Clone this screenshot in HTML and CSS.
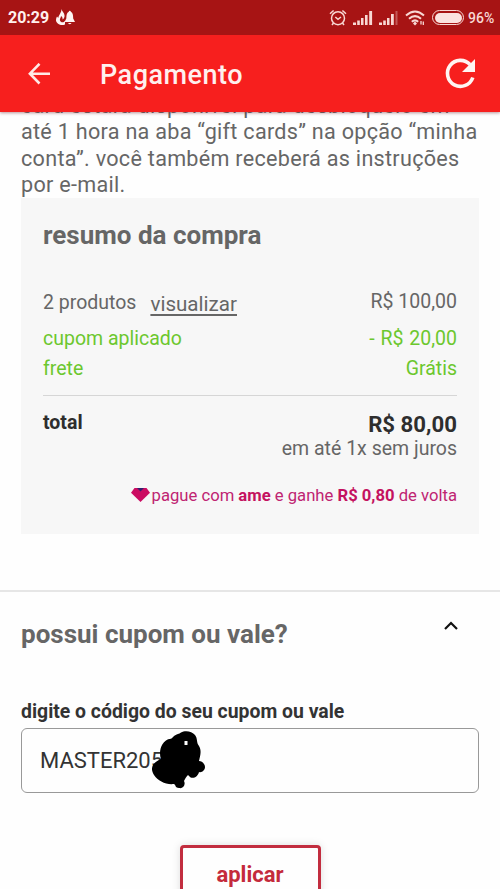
FILE: index.html
```html
<!DOCTYPE html>
<html lang="pt-BR">
<head>
<meta charset="utf-8">
<title>Pagamento</title>
<link rel="stylesheet" href="styles.css">
</head>
<body>
<header class="top">
  <div class="status">
    <span class="clock">20:29</span>
    <svg class="notif" width="20" height="18" viewBox="0 0 20 18"><path d="M5.500 0 C6 3 9 4 8.500 7.500 C8.300 9 7.400 10 6.500 10.500 C6.800 8.500 6 7.500 5 7 C4.800 9 3.500 10 4 11.500 C4.500 13.500 7.500 14 9 12 L9 15.500 C5 17 .5 15 0 11.500 C-.1 10 .4 8.500 1 7.500 L2.300 9 C2.500 6 5.500 4 5.500 0Z" fill="#fff4f2"/><path d="M12.800 2.800 a1 1 0 0 1 2 0 C17 3.700 17 6 17.200 9.500 L19 13 H8.500 L10.300 9.500 C10.500 6 10.600 3.700 12.800 2.800Z M12 14 H15.500 A1.800 1.500 0 0 1 12 14Z" fill="#fff4f2"/></svg>
    <span class="spacer"></span>
    <svg class="alarm" width="18" height="18" viewBox="0 0 18 18" fill="none" stroke="#f8d8d4" stroke-width="1.5"><circle cx="9" cy="9.200" r="6.500"/><path d="M6.300 8 L9 10.300 L12 8 M1 4.800 L4.600 1.500 M17 4.800 L13.400 1.500 M4.500 14 L3 16 M13.500 14 L15 16"/></svg>
    <svg class="signal" width="20" height="14" viewBox="0 0 20 14" fill="#f8d8d4"><path d="M0 11.500h3V14H0zM4.200 9.500h2.600V14H4.200zM8 7h2.500v7H8zM12 4h2.600v10H12zM16.200 0h2.900v14h-2.900z"/></svg>
    <svg class="signal" width="20" height="14" viewBox="0 0 20 14" fill="#f8d8d4"><path d="M0 11.500h3V14H0zM4.200 9.500h2.600V14H4.200zM8 7h2.500v7H8zM12 3h2.800v11H12z"/><path d="M16.500 0h2v14h-2z" opacity=".35"/></svg>
    <svg class="wifi" width="20" height="16" viewBox="0 0 20 16" fill="none" stroke="#f8d8d4" stroke-width="2"><path d="M1 5.500 Q10 -2.500 19 5.500 M4 8.800 Q10 3.500 16 8.800 M6.800 11.800 Q10 9 13.200 11.800"/><path d="M10 11.500 L12 13.500 L10 15.500 L8 13.500Z" fill="#f8d8d4" stroke="none"/><path d="M16 11v3.500M18.300 11.500V15" stroke-width="1.300"/></svg>
    <span class="battery"><span class="charge"></span></span>
    <span class="percent">96%</span>
  </div>
  <div class="bar">
    <svg class="back" width="22" height="22" viewBox="0 0 22 22" fill="none" stroke="#ffe9e6" stroke-width="2.600"><path d="M11.500 .8 L1.900 10.700 L11.500 20.500 M1.900 10.700 H22"/></svg>
    <h1 class="title">Pagamento</h1>
    <svg class="reload" width="32" height="32" viewBox="0 0 32 32"><path d="M26 6.500 A13 13 0 1 0 28.800 19.500" fill="none" stroke="#fff4f2" stroke-width="3.600"/><path d="M31 1 V14 H18Z" fill="#fff4f2"/></svg>
  </div>
</header>
<main>
  <p class="notice">card estará disponível para desbloqueio em<br>até 1 hora na aba “gift cards” na opção “minha<br>conta”. você também receberá as instruções<br>por e-mail.</p>
  <section class="summary">
    <h2 class="heading">resumo da compra</h2>
    <div class="row products"><span>2 produtos<a class="view">visualizar</a></span><span class="amount">R$ 100,00</span></div>
    <div class="row green"><span>cupom aplicado</span><span class="discount">- R$ 20,00</span></div>
    <div class="row green"><span>frete</span><span>Grátis</span></div>
    <div class="row total"><b class="total-label">total</b><b class="total-value">R$ 80,00</b></div>
    <p class="installments">em até 1x sem juros</p>
    <p class="cashback"><svg class="gem" width="19" height="14" viewBox="0 0 19 14"><path d="M3.500 0H15.500L19 4.800 9.500 14 0 4.800Z" fill="#cb0c62"/><path d="M6 0H13L9.500 3.500Z" fill="#34206f"/></svg><span>pague com <b>ame</b> e ganhe <b>R$ 0,80</b> de volta</span></p>
  </section>
  <section class="voucher">
    <div class="voucher-head">
      <h2 class="heading">possui cupom ou vale?</h2>
      <svg class="chevron" width="14" height="9" viewBox="0 0 14 9" fill="none" stroke="#111" stroke-width="2.200"><path d="M1 8 L7 2 L13 8"/></svg>
    </div>
    <div class="label">digite o código do seu cupom ou vale</div>
    <div class="field"><span class="code">MASTER205</span>
      <svg class="scribble" width="54" height="58" viewBox="0 0 54 58"><path fill-rule="evenodd" d="M22 5 C25 3 27 3 29 1.500 C33 -1 40 0 43 4 C46 8 44 11 47 15 C50 20 48 25 47 30 C50 30 53 33 53 36 C53 39 50 42 47 41 C46 46 40 49 37 45 L36 44 C34 46 33 48 32 50 C34 54 31 58 27 57 C23 57 24 54 22 53 C14 54 6 50 2 44 C-3 36 2 31 9 28 C6 20 10 10 17 8 C20 8 20 7 22 5Z M32.500 10V14H35.500V10Z"/></svg>
    </div>
    <button class="apply">aplicar</button>
  </section>
</main>
</body>
</html>
```
FILE: styles.css
```css
* { box-sizing: border-box; }
body { margin: 0; width: 500px; height: 889px; overflow: hidden; background: #fefefe; color: #666; font-family: Roboto, "Liberation Sans", sans-serif; }
h1, h2, p { margin: 0; white-space: nowrap; }
svg { display: block; flex: none; }
.top { position: relative; height: 112px; box-shadow: 0 1px 3px rgba(120, 40, 50, .5); background: #f71f1e; color: #fff0ee; }
.status { height: 35px; background: #a71414; display: flex; align-items: center; padding-left: 8px; }
.clock { font-size: 16px; font-weight: 700; width: 48px; }
.spacer { flex: 1; }
.alarm { margin-right: 6px; }
.signal { margin-right: 6px; }
.wifi { margin-right: 7px; }
.battery { width: 32px; height: 15px; border: 1.5px solid #f8d8d4; border-radius: 8px; padding: 1.5px; margin-right: 4px; }
.charge { display: block; height: 100%; border-radius: 5px; background: #fbe3e0; }
.percent { width: 32px; font-size: 14px; font-weight: 500; color: #f8d8d4; }
.bar { height: 77px; display: flex; align-items: center; padding: 0 24px 0 28px; }
.title { margin-left: 50px; flex: 1; font-size: 27px; line-height: 32px; font-weight: 500; padding-top: 3px; letter-spacing: .5px; }
.notice { margin: -19px 21px 0; height: 105px; font-size: 21.6px; line-height: 26.3px; letter-spacing: .28px; }
.summary { margin: 0 21px; height: 336px; padding: 21px 22px 0; background: #f7f7f7; font-size: 19.5px; }
.heading { font-size: 26px; line-height: 32px; font-weight: 700; color: #666; }
.row { display: flex; justify-content: space-between; line-height: 30px; height: 30px; white-space: nowrap; }
.products { margin-top: 36px; height: 37px; }
.view { position: relative; top: 2px; margin-left: 14px; font-size: 20.6px; text-decoration: underline; text-underline-offset: 3px; }
.discount { word-spacing: 1px; }
.green { color: #6cc72e; }
.total { margin-top: 11px; border-top: 1px solid #d6d6d6; height: 42px; padding-top: 12px; color: #2e2e2e; }
.total-value { font-size: 22.2px; line-height: 33px; }
.installments { text-align: right; line-height: 24px; }
.cashback { display: flex; justify-content: flex-end; color: #bf2472; font-size: 16.65px; line-height: 22px; margin-top: 24px; }
.cashback b { color: #c4125f; }
.gem { margin: 3px 2px 0 0; }
.voucher { margin-top: 56px; border-top: 2px solid #e6e6e6; padding: 26px 21px 0; display: flex; flex-direction: column; }
.voucher-head { display: flex; justify-content: space-between; padding-right: 21px; }
.chevron { margin-top: 3px; }
.label { margin-top: 50px; font-size: 19.4px; line-height: 24px; height: 28px; font-weight: 700; color: #333; white-space: nowrap; }
.field { position: relative; height: 65px; border: 1px solid #999; border-radius: 6px; display: flex; align-items: center; padding-left: 18px; font-size: 22px; color: #333; }
.scribble { position: absolute; left: 130px; top: 2px; }
.apply { margin-top: 52px; align-self: center; width: 141px; height: 60px; border: 3px solid #c22d3f; border-radius: 4px; background: #fefefe; color: #c42a3b; font: 700 22px/30px Roboto, "Liberation Sans", sans-serif; box-shadow: 0 0 8px rgba(0, 0, 0, .13); }
```
